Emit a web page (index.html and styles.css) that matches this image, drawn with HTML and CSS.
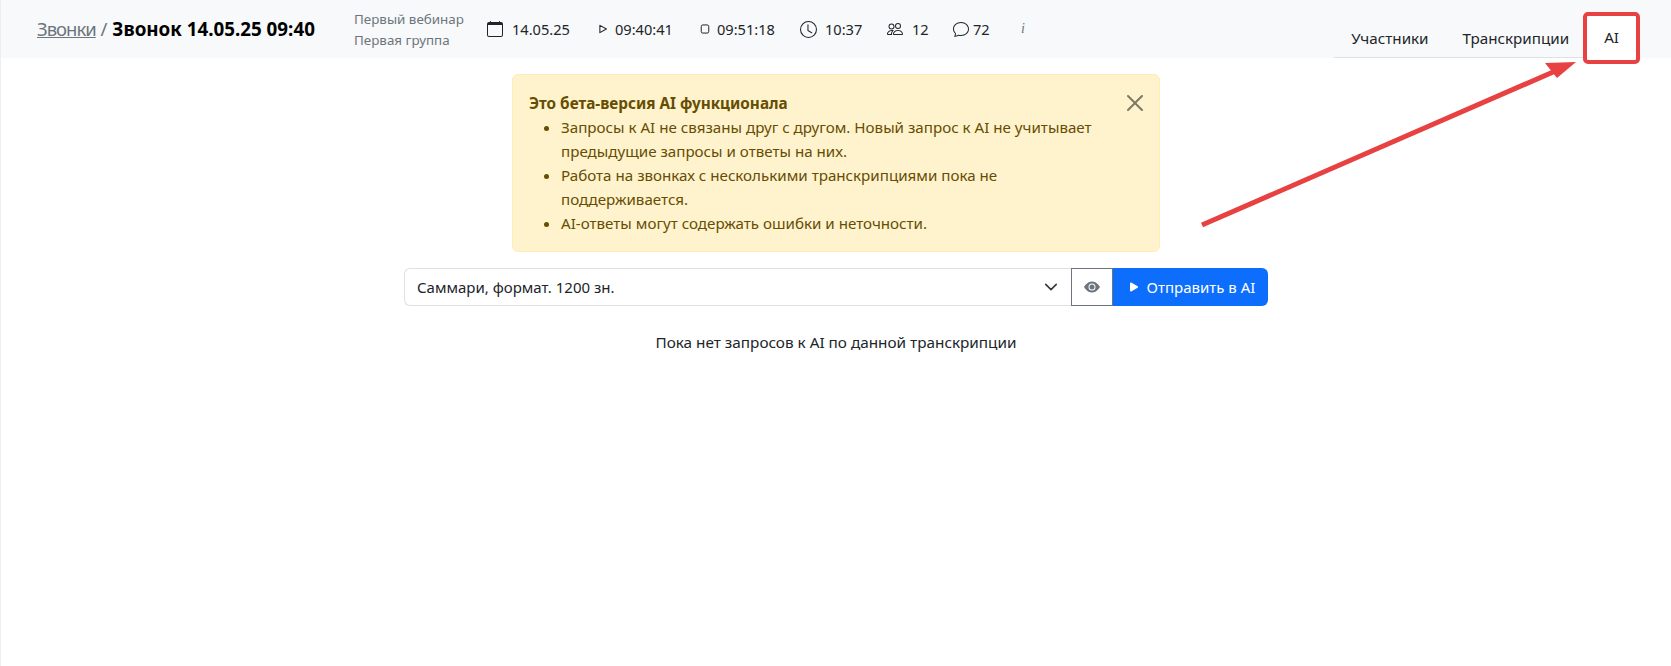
FILE: index.html
```html
<!DOCTYPE html>
<html lang="ru">
<head>
<meta charset="utf-8">
<title>Звонок 14.05.25 09:40</title>
<link rel="stylesheet" href="styles.css">
</head>
<body>
<header class="topbar">
  <h1 class="crumbs"><a href="#" class="crumb-link">Звонки</a> <span class="crumb-sep">/</span> <b class="crumb-current">Звонок 14.05.25 09:40</b></h1>
  <div class="call-group"><div>Первый вебинар</div><div>Первая группа</div></div>
  <ul class="stats">
    <li class="stat stat-date"><svg class="ico ico-16" viewBox="0 0 16 16"><path fill="#212529" d="M3.5 0a.5.5 0 0 1 .5.5V1h8V.5a.5.5 0 0 1 1 0V1h1a2 2 0 0 1 2 2v11a2 2 0 0 1-2 2H2a2 2 0 0 1-2-2V3a2 2 0 0 1 2-2h1V.5a.5.5 0 0 1 .5-.5zM1 4v10a1 1 0 0 0 1 1h12a1 1 0 0 0 1-1V4H1z"/></svg>14.05.25</li>
    <li class="stat stat-start"><svg class="ico ico-10" viewBox="0 0 16 16"><path fill="none" stroke="#212529" stroke-width="1.7" stroke-linejoin="round" d="M3 2.2 13.5 8 3 13.8z"/></svg>09:40:41</li>
    <li class="stat stat-stop"><svg class="ico ico-10" viewBox="0 0 16 16"><path fill="none" stroke="#212529" stroke-width="1.6" d="M4.5 1.5h7a2.5 2.5 0 0 1 2.5 2.5v8a2.5 2.5 0 0 1-2.5 2.5h-7A2.5 2.5 0 0 1 2 12V4a2.5 2.5 0 0 1 2.5-2.5z"/></svg>09:51:18</li>
    <li class="stat stat-dur"><svg class="ico ico-17" viewBox="0 0 16 16"><path fill="#212529" d="M8 3.5a.5.5 0 0 0-1 0V9a.5.5 0 0 0 .252.434l3.5 2a.5.5 0 0 0 .496-.868L8 8.71V3.5z"/><path fill="#212529" d="M8 16A8 8 0 1 0 8 0a8 8 0 0 0 0 16zm7-8A7 7 0 1 1 1 8a7 7 0 0 1 14 0z"/></svg>10:37</li>
    <li class="stat stat-people"><svg class="ico ico-16" viewBox="0 0 16 16"><path fill="#212529" d="M15 14s1 0 1-1-1-4-5-4-5 3-5 4 1 1 1 1h8zm-7.978-1A.261.261 0 0 1 7 12.996c.001-.264.167-1.03.76-1.72C8.312 10.629 9.282 10 11 10c1.717 0 2.687.63 3.24 1.276.593.69.758 1.457.76 1.72l-.008.002a.274.274 0 0 1-.014.002H7.022zM11 7a2 2 0 1 0 0-4 2 2 0 0 0 0 4zm3-2a3 3 0 1 1-6 0 3 3 0 0 1 6 0zM6.936 9.28a5.88 5.88 0 0 0-1.23-.247A7.35 7.35 0 0 0 5 9c-4 0-5 3-5 4 0 .667.333 1 1 1h4.216A2.238 2.238 0 0 1 5 13c0-1.01.377-2.042 1.09-2.904.243-.294.526-.569.846-.816zM4.92 10A5.493 5.493 0 0 0 4 13H1c0-.26.164-1.03.76-1.724.545-.636 1.492-1.256 3.16-1.275zM1.5 5.5a3 3 0 1 1 6 0 3 3 0 0 1-6 0zm3-2a2 2 0 1 0 0 4 2 2 0 0 0 0-4z"/></svg>12</li>
    <li class="stat stat-chat"><svg class="ico ico-16" viewBox="0 0 16 16"><path fill="#212529" d="M2.678 11.894a1 1 0 0 1 .287.801 10.97 10.97 0 0 1-.398 2c1.395-.323 2.247-.697 2.634-.893a1 1 0 0 1 .71-.074A8.06 8.06 0 0 0 8 14c3.996 0 7-2.807 7-6 0-3.192-3.004-6-7-6S1 4.808 1 8c0 1.468.617 2.83 1.678 3.894zm-.493 3.905a21.682 21.682 0 0 1-.713.129c-.2.032-.352-.176-.273-.362a9.68 9.68 0 0 0 .244-.637l.003-.01c.248-.72.45-1.548.524-2.319C.743 11.37 0 9.76 0 8c0-3.866 3.582-7 8-7s8 3.134 8 7-3.582 7-8 7a9.06 9.06 0 0 1-2.347-.306c-.52.263-1.639.742-3.468 1.105z"/></svg>72</li>
    <li class="stat stat-info"><i class="info-mark">i</i></li>
  </ul>
  <nav class="tabs">
    <a href="#" class="tab">Участники</a>
    <a href="#" class="tab">Транскрипции</a>
    <a href="#" class="tab tab-active">AI</a>
  </nav>
</header>

<main class="content">
  <section class="notice">
    <button class="notice-close" type="button" aria-label="Закрыть"><svg viewBox="0 0 16 16"><path fill="#000" d="M.293.293a1 1 0 0 1 1.414 0L8 6.586 14.293.293a1 1 0 1 1 1.414 1.414L9.414 8l6.293 6.293a1 1 0 0 1-1.414 1.414L8 9.414l-6.293 6.293a1 1 0 0 1-1.414-1.414L6.586 8 .293 1.707a1 1 0 0 1 0-1.414z"/></svg></button>
    <b class="notice-title">Это бета-версия AI функционала</b>
    <ul class="notice-list">
      <li>Запросы к AI не связаны друг с другом. Новый запрос к AI не учитывает предыдущие запросы и ответы на них.</li>
      <li>Работа на звонках с несколькими транскрипциями пока не поддерживается.</li>
      <li>AI-ответы могут содержать ошибки и неточности.</li>
    </ul>
  </section>

  <form class="prompt-row">
    <div class="select-box">
      <span>Саммари, формат. 1200 зн.</span>
      <svg class="chevron" viewBox="0 0 16 16"><path fill="none" stroke="#343a40" stroke-linecap="round" stroke-linejoin="round" stroke-width="1.9" d="m2 5 6 6 6-6"/></svg>
    </div>
    <button type="button" class="eye-btn"><svg viewBox="0 0 16 16"><path fill="#6c757d" d="M10.5 8a2.5 2.5 0 1 1-5 0 2.5 2.5 0 0 1 5 0z"/><path fill="#6c757d" d="M0 8s3-5.5 8-5.5S16 8 16 8s-3 5.5-8 5.5S0 8 0 8zm8 3.5a3.5 3.5 0 1 0 0-7 3.5 3.5 0 0 0 0 7z"/></svg></button>
    <button type="button" class="send-btn"><svg viewBox="0 0 16 16"><path fill="#fff" d="m11.596 8.697-6.363 3.692c-.54.313-1.233-.066-1.233-.697V4.308c0-.63.692-1.01 1.233-.696l6.363 3.692a.802.802 0 0 1 0 1.393z"/></svg>Отправить в AI</button>
  </form>

  <p class="empty">Пока нет запросов к AI по данной транскрипции</p>
</main>

<svg class="annotation" viewBox="0 0 1671 666" aria-hidden="true">
  <rect x="1585" y="14" width="53" height="48" rx="3" fill="none" stroke="#e84142" stroke-width="4"/>
  <path d="M1202 225 1560 69" stroke="#e84142" stroke-width="5" fill="none"/>
  <path d="M1576 62 1545 63 1557 78z" fill="#e84142"/>
</svg>
</body>
</html>
```
FILE: styles.css
```css
* { box-sizing: border-box; }
html, body { margin: 0; height: 100%; }
body {
  font-family: "Noto Sans", "Open Sans", sans-serif;
  font-size: 15px;
  line-height: 24px;
  color: #212529;
  background: #fff;
  border-left: 1px solid #eceef0;
  height: 666px;
  overflow: hidden;
  position: relative;
}
.topbar {
  display: flex;
  align-items: center;
  height: 58px;
  margin-left: -1px;
  background: #f8f9fa;
  padding-left: 37px;
}
.crumbs { margin: 0 0 1px; font-size: 18.5px; font-weight: 400; line-height: 24px; width: 317px; white-space: nowrap; color: #6c757d; }
.crumb-link { color: #6c757d; text-decoration: underline; letter-spacing: -1px; }
.crumb-current { font-weight: 700; font-size: 18.8px; color: #000; }
.call-group { width: 133px; padding-top: 2px; font-size: 13.4px; line-height: 21px; color: #6c757d; white-space: nowrap; }
.stats { display: flex; align-items: center; list-style: none; margin: 0; padding: 0; font-size: 14.6px; white-space: nowrap; }
.stat { display: flex; align-items: center; }
.ico { flex: none; display: block; }
.ico-16 { width: 16px; height: 16px; margin-right: 9px; }
.ico-17 { width: 17px; height: 17px; margin-right: 8px; }
.ico-10 { width: 10px; height: 10px; margin-right: 7px; }
.stat-date { width: 111px; }
.stat-start { width: 102px; }
.stat-stop { width: 100px; }
.stat-dur { width: 87px; }
.stat-people { width: 66px; }
.stat-chat { width: 68px; }
.stat-chat .ico { margin-right: 4px; }
.info-mark { font-family: "Liberation Serif", serif; font-size: 14px; color: #6c757d; }
.tabs { margin-left: auto; margin-right: 34px; display: flex; align-self: flex-end; border-bottom: 1px solid #dee2e6; height: 40px; }
.tab { display: flex; align-items: center; padding: 0 17px; height: 40px; color: #212529; text-decoration: none; font-size: 15.2px; }
.tab-active { background: #fff; height: 44px; margin-top: -4px; border: 1px solid #dee2e6; border-bottom: 0; padding: 0 17px; }
.content { display: flex; flex-direction: column; align-items: center; padding-top: 16px; width: 864px; margin: 0 auto; }
.notice {
  position: relative;
  width: 648px;
  height: 178px;
  padding: 16px 48px 16px 16px;
  background: #fff3cd;
  border: 1px solid #ffecb5;
  border-radius: 6px;
  color: #664d03;
}
.notice-title { display: block; font-size: 15.3px; }
.notice-list { margin: 0; padding-left: 32px; font-size: 15.15px; }
.notice-close { position: absolute; top: 20px; right: 16px; width: 16px; height: 16px; padding: 0; border: 0; background: none; opacity: .5; }
.notice-close svg { display: block; width: 16px; height: 16px; }
.prompt-row { display: flex; width: 864px; height: 38px; margin-top: 16px; }
.select-box {
  flex: 1;
  display: flex;
  align-items: center;
  justify-content: space-between;
  padding: 0 13px 0 12px;
  border: 1px solid #dee2e6;
  border-right: 0;
  border-radius: 6px 0 0 6px;
}
.chevron { width: 14px; height: 14px; }
.eye-btn { width: 42px; display: flex; align-items: center; justify-content: center; padding: 0; background: #fff; border: 1px solid #6c757d; }
.eye-btn svg { width: 16px; height: 16px; }
.send-btn { width: 155px; display: flex; align-items: center; justify-content: center; gap: 5px; padding: 0; background: #0d6efd; color: #fff; border: 0; border-radius: 0 6px 6px 0; font: inherit; }
.send-btn svg { width: 16px; height: 16px; }
.empty { margin: 24px 0 0; text-align: center; font-size: 15.3px; }
.annotation { position: absolute; left: -1px; top: 0; width: 1671px; height: 666px; pointer-events: none; }
```
